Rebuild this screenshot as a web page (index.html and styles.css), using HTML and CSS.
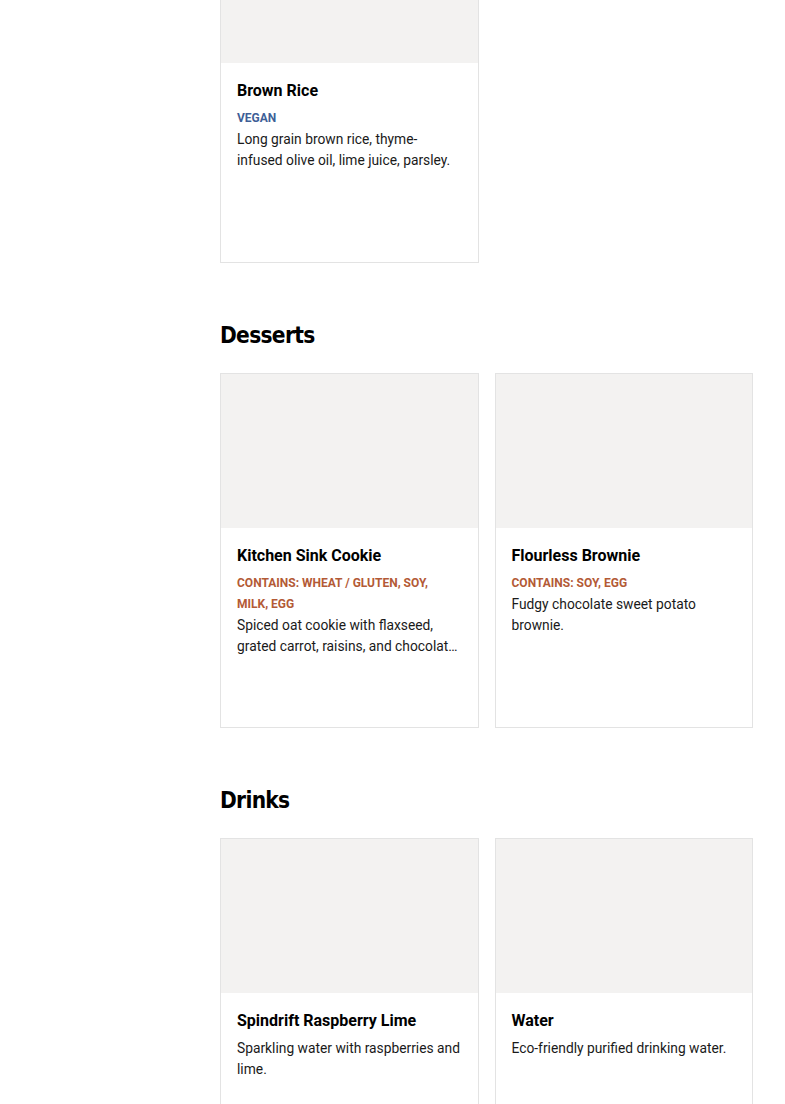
FILE: index.html
```html
<!DOCTYPE html>
<html lang="en">
<head>
  <meta charset="UTF-8">
  <title>Menu</title>
  <link rel="stylesheet" href="styles.css">
</head>
<body>
  <div class="page">
    <aside class="sidebar"></aside>
    <main class="menu">
      <section class="section first">
        <div class="grid">
          <div class="card">
            <div class="card-img"></div>
            <div class="card-body">
              <h3>Brown Rice</h3>
              <div class="tag vegan">Vegan</div>
              <p>Long grain brown rice, thyme-infused olive oil, lime juice, parsley.</p>
            </div>
          </div>
        </div>
      </section>

      <section class="section">
        <h2>Desserts</h2>
        <div class="grid">
          <div class="card">
            <div class="card-img"></div>
            <div class="card-body">
              <h3>Kitchen Sink Cookie</h3>
              <div class="tag allergen">Contains: Wheat / Gluten, Soy, Milk, Egg</div>
              <p>Spiced oat cookie with flaxseed, grated carrot, raisins, and chocolate chips.</p>
            </div>
          </div>
          <div class="card">
            <div class="card-img"></div>
            <div class="card-body">
              <h3>Flourless Brownie</h3>
              <div class="tag allergen">Contains: Soy, Egg</div>
              <p>Fudgy chocolate sweet potato brownie.</p>
            </div>
          </div>
        </div>
      </section>

      <section class="section">
        <h2>Drinks</h2>
        <div class="grid">
          <div class="card">
            <div class="card-img"></div>
            <div class="card-body">
              <h3>Spindrift Raspberry Lime</h3>
              <p>Sparkling water with raspberries and lime.</p>
            </div>
          </div>
          <div class="card">
            <div class="card-img"></div>
            <div class="card-body">
              <h3>Water</h3>
              <p>Eco-friendly purified drinking water.</p>
            </div>
          </div>
        </div>
      </section>
    </main>
  </div>
</body>
</html>
```

FILE: styles.css
```css
body {
  margin: 0;
  font-family: Roboto, "Liberation Sans", sans-serif;
  background: white;
  color: #1a1a1a;
}
.page {
  display: flex;
  padding-right: 32px;
}
.sidebar {
  width: 220px;
  flex-shrink: 0;
}
.menu {
  flex: 1;
  margin-top: -92px;
}
.section h2 {
  font-family: "DejaVu Sans Condensed", "Liberation Sans", sans-serif;
  font-size: 22.5px;
  font-weight: bold;
  letter-spacing: -0.7px;
  line-height: 30px;
  margin: 57px 0 23px;
  color: #000;
}
.grid {
  display: grid;
  grid-template-columns: 1fr 1fr;
  gap: 16px;
}
.card {
  border: 1px solid #e3e3e3;
  height: 353px;
  display: flex;
  flex-direction: column;
}
.card-img {
  height: 154px;
  background: #f3f2f1;
}
.card-body {
  padding: 16px;
}
.card-body h3 {
  font-size: 16px;
  font-weight: bold;
  line-height: 24px;
  margin: 0 0 5px;
  color: #000;
}
.tag {
  font-size: 12px;
  font-weight: bold;
  line-height: 21px;
  text-transform: uppercase;
}
.vegan {
  color: #3f5f97;
}
.allergen {
  color: #b35a36;
}
.card-body p {
  margin: 0;
  font-size: 13.8px;
  line-height: 21px;
  display: -webkit-box;
  -webkit-line-clamp: 2;
  -webkit-box-orient: vertical;
  overflow: hidden;
}
```
